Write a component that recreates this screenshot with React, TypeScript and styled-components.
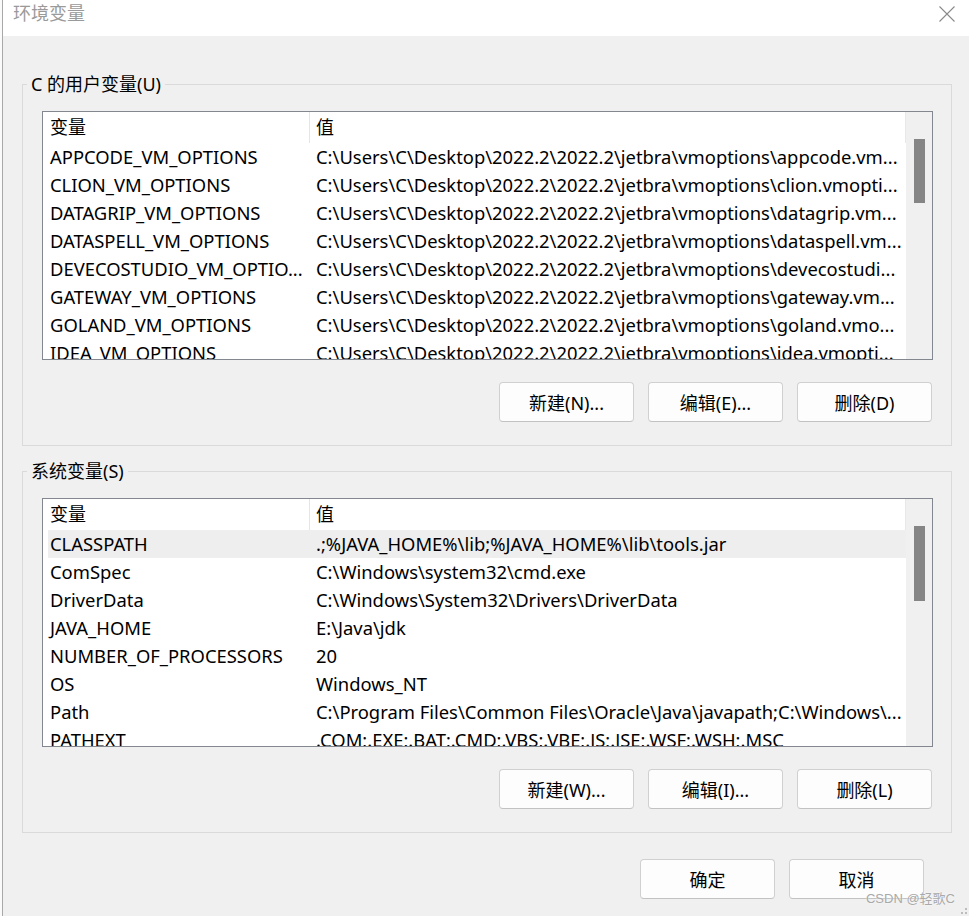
import React from 'react';
import styled, { createGlobalStyle } from 'styled-components';

const GlobalStyle = createGlobalStyle`
  html, body {
    margin: 0;
    padding: 0;
    background: #fafafa;
  }
  body {
    font-family: 'Noto Sans', 'Noto Sans CJK SC', sans-serif;
    color: #000;
  }
`;

const Window = styled.div`
  box-sizing: border-box;
  width: 967px;
  height: 916px;
  margin-left: 2px;
  border-left: 1px solid #a8a8a8;
  background: #f0f0f0;
  display: flex;
  flex-direction: column;
  position: relative;
  overflow: hidden;
`;

const TitleBar = styled.div`
  height: 36px;
  background: #fff;
  display: flex;
  align-items: flex-start;
  justify-content: space-between;
  padding: 0 14px 0 10px;
`;

const Title = styled.span`
  font-family: 'Noto Sans CJK SC', sans-serif;
  font-size: 18px;
  line-height: 24px;
  color: #9a9a9a;
`;

const CloseIcon = styled.svg`
  margin-top: 6px;
`;

const Body = styled.div`
  display: flex;
  flex-direction: column;
  padding: 37px 17px 0 19px;
`;

const Group = styled.fieldset<{ $gap?: number }>`
  margin: ${(p) => p.$gap ?? 0}px 0 0;
  padding: 16px 18px 23px 19px;
  border: 1px solid #dadada;
  min-inline-size: 0;
`;

const Legend = styled.legend`
  margin-left: -15px;
  padding: 0 4px;
  font-size: 18px;
  line-height: 22px;
`;

const ListBox = styled.div`
  box-sizing: border-box;
  height: 249px;
  border: 1px solid #828790;
  background: #fff;
  display: flex;
`;

const ListContent = styled.div`
  flex: 1;
  overflow: hidden;
`;

const HeaderRow = styled.div`
  display: flex;
  height: 31px;
  border-right: 1px solid #e8e8e8;
`;

const HeaderCell = styled.div<{ $w?: number }>`
  box-sizing: border-box;
  ${(p) => (p.$w ? `width: ${p.$w}px; border-right: 1px solid #e5e5e5;` : 'flex: 1;')}
  padding-left: ${(p) => (p.$w ? 7 : 6)}px;
  font-size: 18px;
  line-height: 31px;
`;

const Row = styled.div<{ $selected?: boolean }>`
  display: flex;
  height: 28px;
  margin-left: 5px;
  background: ${(p) => (p.$selected ? '#eeeeee' : 'transparent')};
`;

const Cell = styled.div<{ $w?: number }>`
  box-sizing: border-box;
  ${(p) => (p.$w ? `width: ${p.$w}px; padding-left: 2px;` : 'flex: 1; padding-left: 7px;')}
  font-size: 18.4px;
  line-height: 28px;
  white-space: nowrap;
  overflow: hidden;
`;

const ScrollTrack = styled.div`
  width: 26px;
  background: #f0f0f0;
  padding: 27px 0 0 8px;
  box-sizing: border-box;
`;

const Thumb = styled.div<{ $h: number }>`
  width: 11px;
  height: ${(p) => p.$h}px;
  background: #858585;
`;

const ButtonRow = styled.div<{ $top: number; $right?: number }>`
  display: flex;
  justify-content: flex-end;
  gap: 14px;
  margin-top: ${(p) => p.$top}px;
  margin-right: ${(p) => p.$right ?? 1}px;
`;

const Button = styled.button`
  box-sizing: border-box;
  width: 135px;
  height: 40px;
  background: #fdfdfd;
  border: 1px solid #d0d0d0;
  border-bottom-color: #c2c2c2;
  border-radius: 4px;
  font-family: 'Noto Sans', 'Noto Sans CJK SC', sans-serif;
  font-size: 18px;
  color: #000;
  padding: 0;
`;

const Watermark = styled.div`
  position: absolute;
  right: 14px;
  bottom: 9px;
  font-family: 'Liberation Sans', 'Noto Sans CJK SC', sans-serif;
  font-size: 13px;
  color: #a9a9a9;
  text-shadow: 0 0 2px #fff;
`;

const Grip = styled.svg`
  position: absolute;
  right: 2px;
  bottom: 2px;
`;

type Item = [string, string];

const userVars: Item[] = [
  ['APPCODE_VM_OPTIONS', 'C:\\Users\\C\\Desktop\\2022.2\\2022.2\\jetbra\\vmoptions\\appcode.vm...'],
  ['CLION_VM_OPTIONS', 'C:\\Users\\C\\Desktop\\2022.2\\2022.2\\jetbra\\vmoptions\\clion.vmopti...'],
  ['DATAGRIP_VM_OPTIONS', 'C:\\Users\\C\\Desktop\\2022.2\\2022.2\\jetbra\\vmoptions\\datagrip.vm...'],
  ['DATASPELL_VM_OPTIONS', 'C:\\Users\\C\\Desktop\\2022.2\\2022.2\\jetbra\\vmoptions\\dataspell.vm...'],
  ['DEVECOSTUDIO_VM_OPTIO...', 'C:\\Users\\C\\Desktop\\2022.2\\2022.2\\jetbra\\vmoptions\\devecostudi...'],
  ['GATEWAY_VM_OPTIONS', 'C:\\Users\\C\\Desktop\\2022.2\\2022.2\\jetbra\\vmoptions\\gateway.vm...'],
  ['GOLAND_VM_OPTIONS', 'C:\\Users\\C\\Desktop\\2022.2\\2022.2\\jetbra\\vmoptions\\goland.vmo...'],
  ['IDEA_VM_OPTIONS', 'C:\\Users\\C\\Desktop\\2022.2\\2022.2\\jetbra\\vmoptions\\idea.vmopti...'],
];

const systemVars: Item[] = [
  ['CLASSPATH', '.;%JAVA_HOME%\\lib;%JAVA_HOME%\\lib\\tools.jar'],
  ['ComSpec', 'C:\\Windows\\system32\\cmd.exe'],
  ['DriverData', 'C:\\Windows\\System32\\Drivers\\DriverData'],
  ['JAVA_HOME', 'E:\\Java\\jdk'],
  ['NUMBER_OF_PROCESSORS', '20'],
  ['OS', 'Windows_NT'],
  ['Path', 'C:\\Program Files\\Common Files\\Oracle\\Java\\javapath;C:\\Windows\\...'],
  ['PATHEXT', '.COM;.EXE;.BAT;.CMD;.VBS;.VBE;.JS;.JSE;.WSF;.WSH;.MSC'],
];

const VarList = ({ items, selected, thumb }: { items: Item[]; selected?: number; thumb: number }) => (
  <ListBox>
    <ListContent>
      <HeaderRow>
        <HeaderCell $w={267}>变量</HeaderCell>
        <HeaderCell>值</HeaderCell>
      </HeaderRow>
      {items.map(([name, value], i) => (
        <Row key={name} $selected={i === selected}>
          <Cell $w={261}>{name}</Cell>
          <Cell>{value}</Cell>
        </Row>
      ))}
    </ListContent>
    <ScrollTrack>
      <Thumb $h={thumb} />
    </ScrollTrack>
  </ListBox>
);

export default function App() {
  return (
    <>
      <GlobalStyle />
      <Window>
        <TitleBar>
          <Title>环境变量</Title>
          <CloseIcon width="16" height="16" viewBox="0 0 16 16">
            <path d="M0.5 0.5 L15.5 15.5 M15.5 0.5 L0.5 15.5" stroke="#8a8a8a" strokeWidth="1.1" fill="none" />
          </CloseIcon>
        </TitleBar>
        <Body>
          <Group>
            <Legend>C 的用户变量(U)</Legend>
            <VarList items={userVars} thumb={64} />
            <ButtonRow $top={22}>
              <Button>新建(N)...</Button>
              <Button>编辑(E)...</Button>
              <Button>删除(D)</Button>
            </ButtonRow>
          </Group>
          <Group $gap={14}>
            <Legend>系统变量(S)</Legend>
            <VarList items={systemVars} selected={0} thumb={75} />
            <ButtonRow $top={22}>
              <Button>新建(W)...</Button>
              <Button>编辑(I)...</Button>
              <Button>删除(L)</Button>
            </ButtonRow>
          </Group>
          <ButtonRow $top={26} $right={28}>
            <Button>确定</Button>
            <Button>取消</Button>
          </ButtonRow>
        </Body>
        <Watermark>CSDN @轻歌C</Watermark>
        <Grip width="6" height="6" viewBox="0 0 6 6">
          <rect x="4" y="0" width="2" height="2" fill="#bdbdbd" />
          <rect x="0" y="4" width="2" height="2" fill="#bdbdbd" />
          <rect x="4" y="4" width="2" height="2" fill="#bdbdbd" />
        </Grip>
      </Window>
    </>
  );
}
